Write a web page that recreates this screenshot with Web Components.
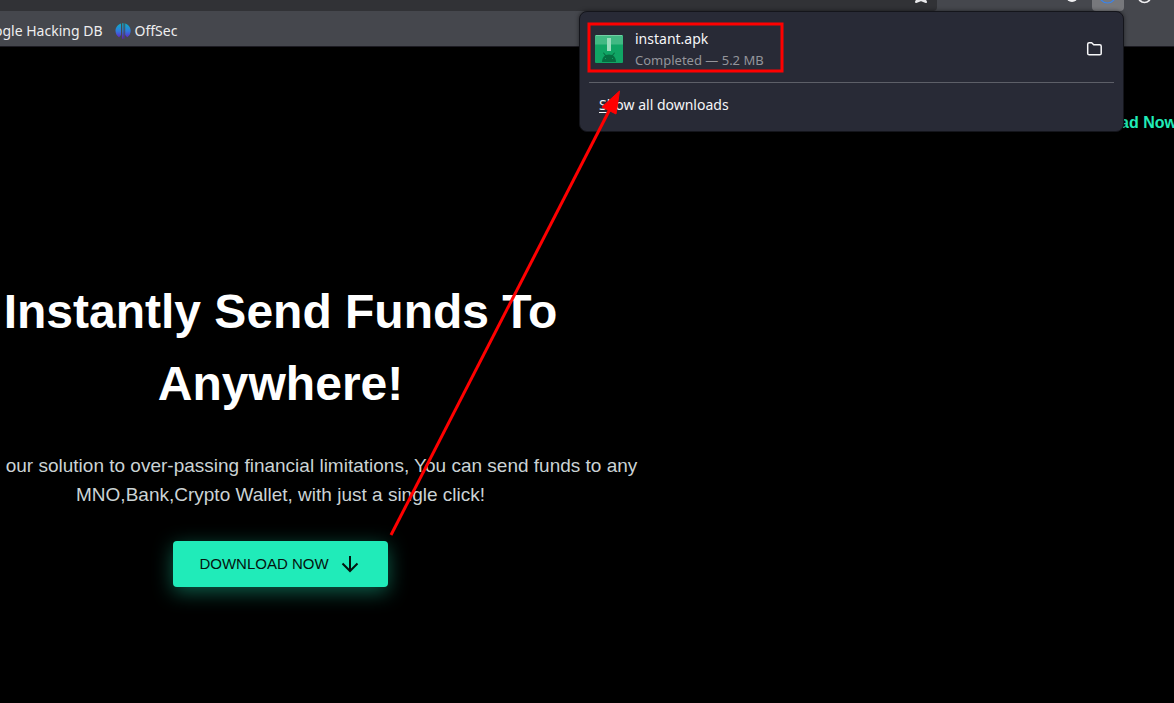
<!DOCTYPE html>
<html lang="en">
<head>
<meta charset="utf-8">
<title>Instant</title>
<style>
  html, body { margin: 0; min-height: 100vh; background: #000; }
  body { font-family: "Liberation Sans", Arial, sans-serif; overflow: hidden; }
</style>
</head>
<body>
<app-window>
  <tool-bar></tool-bar>
  <bookmark-bar>
    <bookmark-link>ogle Hacking DB</bookmark-link>
    <bookmark-link icon>OffSec</bookmark-link>
  </bookmark-bar>
  <site-nav><span>Download Now</span></site-nav>
  <hero-section>
    <span slot="title">Instantly Send Funds To<br>Anywhere!</span>
    <span slot="lead">our solution to over-passing financial limitations, You can send funds to any<br>MNO,Bank,Crypto Wallet, with just a single click!</span>
    <download-button>DOWNLOAD NOW</download-button>
  </hero-section>
  <downloads-panel>
    <download-item name="instant.apk" status="Completed — 5.2 MB"></download-item>
  </downloads-panel>
  <red-annotation></red-annotation>
</app-window>

<script>
const define = (name, html, setup) => {
  const template = document.createElement('template');
  template.innerHTML = html;
  customElements.define(name, class extends HTMLElement {
    constructor() {
      super();
      this.attachShadow({ mode: 'open' }).append(template.content.cloneNode(true));
    }
    connectedCallback() { if (setup) setup(this, this.shadowRoot); }
  });
};

define('app-window', `
  <style>
    :host { display: flex; flex-direction: column; position: relative; min-height: 100vh; overflow: hidden; }
  </style>
  <slot></slot>`);

define('tool-bar', `
  <style>
    :host { display: flex; align-items: flex-end; height: 11px; overflow: hidden; background: #45474d; }
    .url { flex: 1; height: 40px; display: flex; align-items: flex-end; justify-content: flex-end; box-sizing: border-box;
           padding: 0 8px; background: #313236; border-radius: 0 0 4px 0; }
    .tools { display: flex; align-items: flex-end; width: 237px; box-sizing: border-box; padding-right: 20px; justify-content: flex-end; gap: 12px; }
    button { border: 0; padding: 0; background: none; display: flex; align-items: flex-end; justify-content: center; height: 32px; }
    .url button { width: 16px; }
    .ext { width: 16px; }
    .down { width: 32px; background: #77787c; border-radius: 4px; }
    .account { width: 18px; }
    svg { display: block; }
  </style>
  <div class="url">
    <button aria-label="Bookmark this page"><svg width="16" height="24" viewBox="0 0 16 24" fill="none" stroke="#e8e8ea" stroke-width="2" stroke-linejoin="round"><path d="M8 2l2 4 4 1-3 4 2 4-5-2-5 2 2-4-3-4 4-1z"/></svg></button>
  </div>
  <div class="tools">
    <button class="ext" aria-label="Extension"><svg width="16" height="24" viewBox="0 0 16 24"><circle cx="8" cy="9" r="6" fill="#f0f0f2"/></svg></button>
    <button class="down" aria-label="Downloads"><svg width="18" height="24" viewBox="0 0 18 24" fill="none" stroke="#3584f2" stroke-width="1.200"><circle cx="8.500" cy="8" r="8"/></svg></button>
    <button class="account" aria-label="Account"><svg width="18" height="24" viewBox="0 0 18 24" fill="none" stroke="#f0f0f2" stroke-width="1.500"><circle cx="8.500" cy="9" r="6.500"/><path d="M5 13q4-3 8 0"/></svg></button>
  </div>`);

define('bookmark-bar', `
  <style>
    :host { display: flex; align-items: center; gap: 12px; height: 36px; margin-left: -6px; box-sizing: border-box;
            background: #45474d; padding-top: 5px; border-bottom: 1px solid #1c1b22; overflow: hidden; }
  </style>
  <slot></slot>`);

define('bookmark-link', `
  <style>
    :host { display: block; }
    a { display: flex; align-items: center; gap: 4px; color: #eeeeef; text-decoration: none; white-space: nowrap;
        font: 14px/20px "Noto Sans", sans-serif; }
    svg { display: none; }
    :host([icon]) svg { display: block; }
  </style>
  <a href="#"><svg width="16" height="16" viewBox="0 0 16 16"><defs><linearGradient id="g" gradientUnits="userSpaceOnUse" x1="0" y1="0" x2="0" y2="16"><stop offset="0" stop-color="#0bb2c4"/><stop offset=".5" stop-color="#2f7bdc"/><stop offset="1" stop-color="#6a12c9"/></linearGradient></defs><path fill="url(#g)" d="M6 .5v11.500L4 14.300C2 13 .5 10.800.5 7.800S2.500 1.500 6 .5zM7 .2h.8v15.600H7zM8.500.2h.8v15.600h-.8zM10.200.5c3.500 1 5.500 4.300 5.500 7.300s-1.500 5.200-3.500 6.500l-2-2.300z"/></svg><slot></slot></a>`);

define('site-nav', `
  <style>
    :host { display: flex; justify-content: flex-end; margin: 64px -3px 0 0; }
    a { color: #20ebb9; font-size: 16px; line-height: 24px; font-weight: 700; text-decoration: none; white-space: nowrap; }
  </style>
  <a href="#"><slot></slot></a>`);

define('hero-section', `
  <style>
    :host { display: flex; flex-direction: column; align-items: center; box-sizing: border-box; width: 65%;
            margin: 141px 0 0 -101px; text-align: center; white-space: nowrap; }
    h1 { margin: 0; color: #fff; font-size: 48px; line-height: 72px; font-weight: 700; }
    p { margin: 31px 0 32px; color: #cbd3d5; font-size: 19px; line-height: 29px; text-indent: 82px; }
  </style>
  <h1><slot name="title"></slot></h1>
  <p><slot name="lead"></slot></p>
  <slot></slot>`);

define('download-button', `
  <style>
    :host { display: block; }
    button { display: flex; align-items: center; gap: 9px; padding: 11px 26px; border: 0; border-radius: 4px;
             background: #20ebb9; color: #04140f; font: 15px/24px "Liberation Sans", Arial, sans-serif;
             box-shadow: 0 5px 20px rgba(32, 235, 185, .4); }
  </style>
  <button><slot></slot><svg width="24" height="24" viewBox="0 0 24 24" fill="none" stroke="currentColor" stroke-width="2"><path d="M12 4v15M4.500 11.500l7.500 7.500 7.500-7.500"/></svg></button>`);

define('downloads-panel', `
  <style>
    :host { display: block; position: absolute; top: 11px; right: 50px; width: 545px; box-sizing: border-box; padding: 12px 9px;
            background: #282a36; border: 1px solid #14151b; border-radius: 8px; box-shadow: 0 0 4px rgba(0,0,0,.5);
            font-family: "Noto Sans", sans-serif; }
    hr { height: 1px; margin: 8px 0 10px; border: 0; background: #5d5f68; }
    button { display: block; width: 100%; padding: 2px 10px 4px; border: 0; background: none; color: #f6f6f8; text-align: left;
             font: 14px/20px "Noto Sans", sans-serif; }
    u { text-underline-offset: 2px; }
  </style>
  <slot></slot>
  <hr>
  <button><u>S</u>how all downloads</button>`);

define('download-item', `
  <style>
    :host { display: flex; align-items: center; height: 50px; padding: 0 11px 0 6px; gap: 12px; }
    .text { flex: 1; }
    .name { color: #f6f6f8; font-size: 14px; line-height: 22px; }
    .status { color: #94959b; font-size: 13px; line-height: 20px; }
    button { border: 0; padding: 0; background: none; }
    svg { display: block; }
  </style>
  <svg width="28" height="28" viewBox="0 0 28 28"><rect width="28" height="28" rx="1" fill="#10a564"/><path fill="#41b983" d="M1 0h26l1 1v8.500H0V1z"/><path fill="#72cea4" d="M1 0h26v1H1z"/><path fill="#9bdcbd" d="M12 3h4v13h-4z"/><path fill="#066d40" d="M7 27c0-3 1-5 3-6.500L8 18l.7-.5 2.200 2.500q3.100-1.200 6.200 0l2.200-2.500.7.500-2 2.500c2 1.500 3 3.500 3 6.500z"/><path fill="#10a564" d="M10 23h1v1h-1zM17 23h1v1h-1z"/></svg>
  <div class="text"><div class="name"></div><div class="status"></div></div>
  <button aria-label="Show in folder"><svg width="17" height="16" viewBox="0 0 17 16" fill="none" stroke="#f8f8fa" stroke-width="1.500" stroke-linejoin="round"><path d="M1.700 12.500V3.200q0-1.500 1.500-1.500h2.500l2 2h6q1.500 0 1.500 1.500v7.300q0 1.300-1.500 1.300H3.200q-1.500 0-1.500-1.300z"/></svg></button>`,
  (host, root) => {
    root.querySelector('.name').textContent = host.getAttribute('name');
    root.querySelector('.status').textContent = host.getAttribute('status');
  });

define('red-annotation', `
  <style>
    :host { position: absolute; top: 0; right: 0; pointer-events: none; }
    svg { display: block; }
  </style>
  <svg width="1174" height="703" viewBox="0 0 1174 703" aria-hidden="true">
    <rect x="589" y="24" width="193" height="47" fill="none" stroke="#f00" stroke-width="3"/>
    <path d="M391 535L610 109" stroke="#f00" stroke-width="3"/>
    <path d="M619.500 91L602 107L616 114z" fill="#f00" stroke="#f00"/>
  </svg>`);
</script>
</body>
</html>
